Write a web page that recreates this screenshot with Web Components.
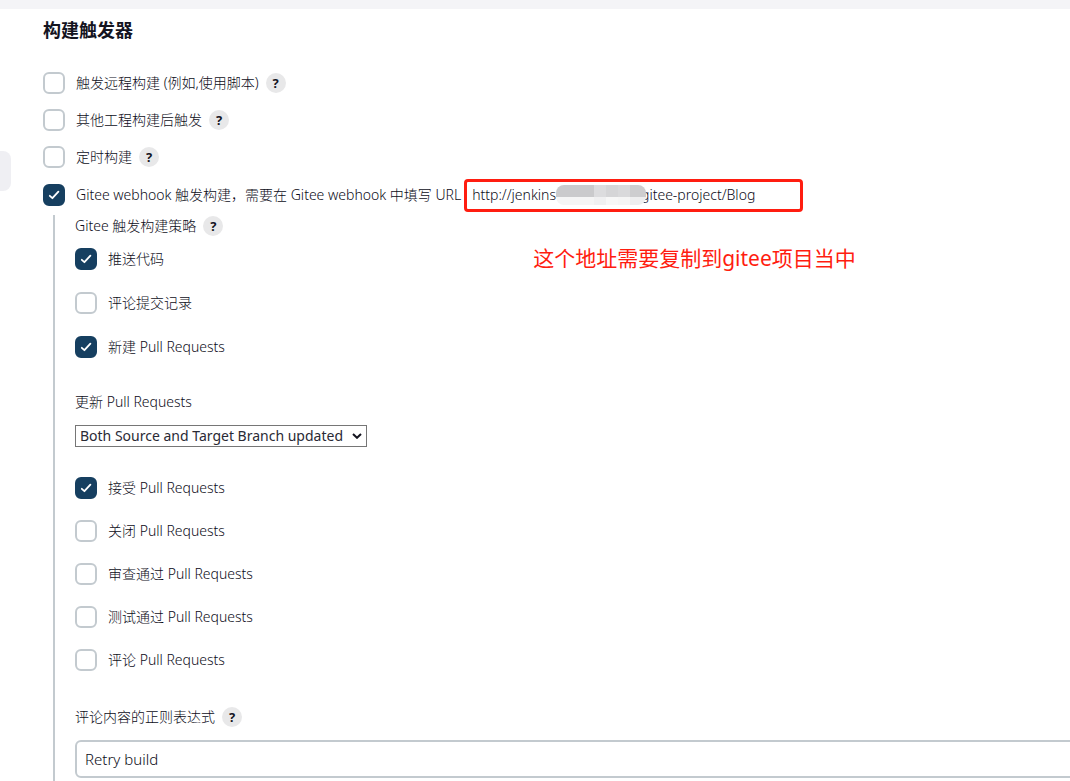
<!DOCTYPE html>
<html lang="zh-CN">
<head>
<meta charset="utf-8">
<title>构建触发器</title>
<style>
  html { height: 100%; }
  body {
    margin: 0;
    min-height: 100%;
    display: flex;
    flex-direction: column;
    overflow: hidden;
    height: 100%;
    background: #fff;
    color: #0c0c18;
    font: 300 14px/20px "Noto Sans", "Noto Sans CJK SC", sans-serif;
    --border: #c3cacf;
    --accent: #163f60;
    --mark: #ff1d10;
  }
</style>
</head>
<body>
<trigger-page></trigger-page>

<template id="t-page">
  <style>
    :host { display: flex; flex-direction: column; flex: 1; min-height: 0; position: relative; }
    header { flex: none; height: 9px; background: #f4f4f7; }
    .tab { position: absolute; left: 0; top: 151px; width: 11px; height: 40px; border-radius: 0 8px 8px 0; background: #efeff3; }
    main { flex: 1; min-height: 0; display: flex; flex-direction: column; padding: 8px 0 0 43px; }
    h2 { margin: 0 0 29px; font-size: 18px; line-height: 26px; font-weight: 700; color: #14141f; }
    .top { display: grid; gap: 15px; flex: none; }
    .tall { height: 24px; }
    .nested { flex: 1 0 auto; margin: 8px 0 0 10px; padding: 0 0 0 20px; border-left: 2px solid var(--border); }
    .stack { display: grid; gap: 21px; }
    .events { gap: 22px; }
    .reviews { margin-top: 30px; }
    .caption { display: flex; align-items: center; gap: 7px; height: 22px; }
    .first { margin-bottom: 11px; }
    .field { margin-top: 34px; }
    regex-field.field { margin-top: 35px; }
  </style>
  <header></header>
  <div class="tab"></div>
  <main>
    <h2>构建触发器</h2>
    <div class="top">
      <check-option help>触发远程构建 (例如,使用脚本)</check-option>
      <check-option help>其他工程构建后触发</check-option>
      <check-option help>定时构建</check-option>
      <check-option class="tall" checked>Gitee webhook 触发构建，需要在 Gitee webhook 中填写 URL<webhook-url slot="after"></webhook-url></check-option>
    </div>
    <div class="nested">
      <div class="caption first"><span>Gitee 触发构建策略</span><help-button></help-button></div>
      <div class="stack events">
        <check-option checked>推送代码</check-option>
        <check-option>评论提交记录</check-option>
        <check-option checked>新建 Pull Requests</check-option>
      </div>
      <branch-select class="field"></branch-select>
      <div class="stack reviews">
        <check-option checked>接受 Pull Requests</check-option>
        <check-option>关闭 Pull Requests</check-option>
        <check-option>审查通过 Pull Requests</check-option>
        <check-option>测试通过 Pull Requests</check-option>
        <check-option>评论 Pull Requests</check-option>
      </div>
      <regex-field class="field"></regex-field>
    </div>
  </main>
</template>

<template id="t-check">
  <style>
    :host { display: flex; align-items: center; height: 22px; white-space: nowrap; }
    label { display: flex; align-items: center; gap: 11px; }
    .box { display: grid; flex: none; }
    .box > * { grid-area: 1 / 1; }
    input { appearance: none; box-sizing: border-box; margin: 0; width: 22px; height: 22px; border: 2px solid var(--border); border-radius: 6px; background: #fff; }
    input:checked { border-color: var(--accent); background: var(--accent); }
    svg { width: 22px; height: 22px; pointer-events: none; visibility: hidden; }
    input:checked + svg { visibility: visible; }
    help-button { margin-left: 7px; }
  </style>
  <label>
    <span class="box">
      <input type="checkbox">
      <svg viewBox="0 0 22 22" fill="none" stroke="#fff" stroke-width="1.8" stroke-linecap="round" stroke-linejoin="round"><path d="M6.8 11.8 9.4 14.2 15.4 7.6"/></svg>
    </span>
    <span><slot></slot></span>
  </label>
  <slot name="after"></slot>
</template>

<template id="t-help">
  <style>
    :host { display: inline-flex; flex: none; }
    button { width: 20px; height: 20px; padding: 0; border: 0; border-radius: 50%; background: #e8e8e9; color: #14141f; font: 700 13px/20px "Noto Sans", sans-serif; text-align: center; }
  </style>
  <button type="button" aria-label="帮助">?</button>
</template>

<template id="t-url">
  <style>
    :host { display: flex; align-items: center; box-sizing: border-box; position: relative; width: 339px; height: 33px; margin-left: 3px; padding-left: 5px; border: 3px solid var(--mark); border-radius: 4px; }
    .mask { flex: none; position: relative; z-index: 1; width: 90px; height: 20px; margin-right: -5px; border-radius: 8px; overflow: hidden; display: grid; grid-template: 12px 8px / 38px 12px 12px 12px 16px; }
    .note { position: absolute; left: 66px; top: 61px; color: var(--mark); font-size: 21px; line-height: 30px; font-weight: 400; }
  </style>
  <span>http://jenkins</span>
  <span class="mask">
    <i style="background:#cacacc"></i><i style="background:#dcdcde"></i><i style="background:#d5d5d7"></i><i style="background:#d9d9db"></i><i style="background:#cdcdcf"></i>
    <i style="background:#f5f5f5"></i><i style="background:#f0f0f1"></i><i style="background:#f7f7f7"></i><i style="background:#f5f5f5"></i><i style="background:#eeeeef"></i>
  </span>
  <span>gitee-project/Blog</span>
  <div class="note">这个地址需要复制到gitee项目当中</div>
</template>

<template id="t-select">
  <style>
    :host { display: grid; justify-items: start; gap: 13px; }
    label { line-height: 20px; }
    .wrap { display: grid; align-items: center; }
    .wrap > * { grid-area: 1 / 1; }
    select { appearance: none; box-sizing: border-box; width: 292px; height: 22px; margin: 0; padding: 0 18px 0 4px; border: 1px solid #767676; border-radius: 0; background: #fff; color: #2a2a35; font: inherit; font-weight: 400; line-height: 20px; }
    svg { width: 10px; height: 6px; justify-self: end; margin-right: 5px; pointer-events: none; }
  </style>
  <label for="branch">更新 Pull Requests</label>
  <span class="wrap">
    <select id="branch"><option>Both Source and Target Branch updated</option></select>
    <svg viewBox="0 0 10 6" fill="none" stroke="#14141f" stroke-width="2"><path d="M1 1 5 4.8 9 1"/></svg>
  </span>
</template>

<template id="t-regex">
  <style>
    :host { display: grid; gap: 12px; }
    .caption { display: flex; align-items: center; gap: 7px; height: 22px; }
    input { box-sizing: border-box; width: calc(100% + 10px); height: 38px; padding: 0 8px; border: 2px solid var(--border); border-radius: 6px; background: #fff; color: inherit; font: inherit; font-size: 15px; }
  </style>
  <div class="caption"><label for="regex">评论内容的正则表达式</label><help-button></help-button></div>
  <input id="regex" type="text" value="Retry build">
</template>

<script>
  class TemplateElement extends HTMLElement {
    constructor() {
      super();
      this.attachShadow({ mode: "open" });
      this.shadowRoot.append(document.getElementById(this.constructor.template).content.cloneNode(true));
    }
  }
  customElements.define("help-button", class extends TemplateElement { static template = "t-help"; });
  customElements.define("check-option", class extends TemplateElement {
    static template = "t-check";
    connectedCallback() {
      this.shadowRoot.querySelector("input").checked = this.hasAttribute("checked");
      if (this.hasAttribute("help") && !this.shadowRoot.querySelector("help-button")) {
        this.shadowRoot.append(document.createElement("help-button"));
      }
    }
  });
  customElements.define("webhook-url", class extends TemplateElement { static template = "t-url"; });
  customElements.define("branch-select", class extends TemplateElement { static template = "t-select"; });
  customElements.define("regex-field", class extends TemplateElement { static template = "t-regex"; });
  customElements.define("trigger-page", class extends TemplateElement { static template = "t-page"; });
</script>
</body>
</html>
